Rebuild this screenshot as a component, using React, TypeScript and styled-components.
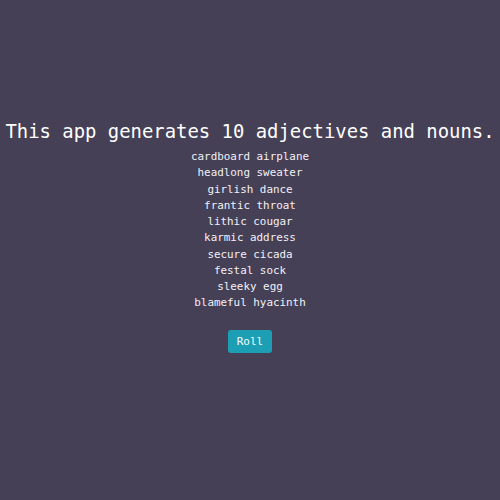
import React from "react";
import styled, { createGlobalStyle } from "styled-components";

const Global = createGlobalStyle`
  html, body { margin: 0; padding: 0; background: #464057; }
  body { font-family: "DejaVu Sans Mono", "Liberation Mono", monospace; }
`;

const Page = styled.main`
  height: 500px;
  display: flex;
  flex-direction: column;
  align-items: center;
  padding-top: 119px;
  box-sizing: border-box;
  color: #ffffff;
`;

const Title = styled.h1`
  margin: 0;
  font-size: 18.9px;
  font-weight: normal;
  line-height: 24px;
  white-space: nowrap;
`;

const List = styled.ul`
  list-style: none;
  margin: 6px 0 0;
  padding: 0;
  display: flex;
  flex-direction: column;
  align-items: center;
`;

const Item = styled.li`
  font-size: 10.9px;
  line-height: 16.25px;
  color: #f2f0f5;
`;

const Button = styled.button`
  margin-top: 18px;
  width: 44px;
  height: 23px;
  border: none;
  border-radius: 3px;
  background: #1c9fb4;
  color: #f4fbfc;
  font-family: "DejaVu Sans Mono", "Liberation Mono", monospace;
  font-size: 11px;
  font-weight: normal;
  padding: 0;
  cursor: pointer;
`;

const words = [
  "cardboard airplane",
  "headlong sweater",
  "girlish dance",
  "frantic throat",
  "lithic cougar",
  "karmic address",
  "secure cicada",
  "festal sock",
  "sleeky egg",
  "blameful hyacinth",
];

export default function App() {
  return (
    <>
      <Global />
      <Page>
        <Title>This app generates 10 adjectives and nouns.</Title>
        <List>
          {words.map((w) => (
            <Item key={w}>{w}</Item>
          ))}
        </List>
        <Button>Roll</Button>
      </Page>
    </>
  );
}
